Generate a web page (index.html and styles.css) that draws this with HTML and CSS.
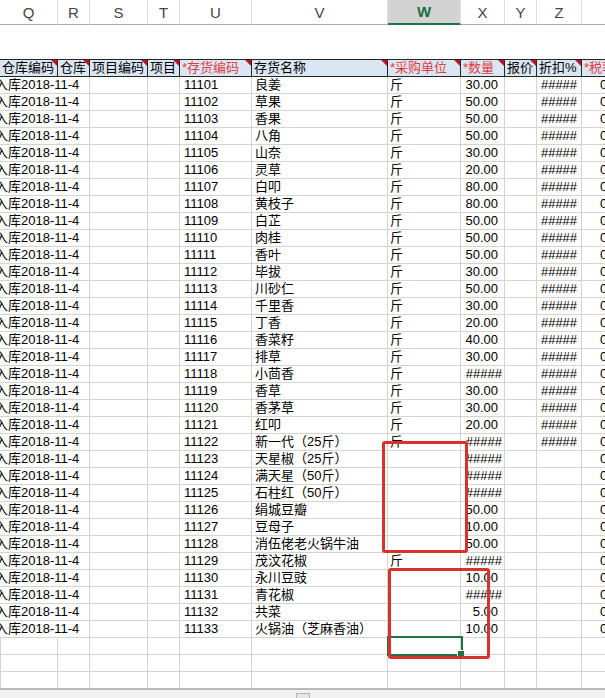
FILE: index.html
```html
<!DOCTYPE html>
<html lang="zh">
<head>
<meta charset="utf-8">
<title>Sheet</title>
<link rel="stylesheet" href="styles.css">
</head>
<body>
<div class="sheet">
  <div class="row letters">
    <div class="l">Q</div><div class="l">R</div><div class="l">S</div><div class="l">T</div><div class="l">U</div><div class="l">V</div><div class="l sel">W</div><div class="l">X</div><div class="l">Y</div><div class="l">Z</div><div class="l">A</div>
  </div>
  <div class="gap"></div>
  <div class="row thead">
    <div class="h">仓库编码</div><div class="h">仓库</div><div class="h">项目编码</div><div class="h">项目</div><div class="h req">*存货编码</div><div class="h">存货名称</div><div class="h req">*采购单位</div><div class="h req">*数量</div><div class="h">报价</div><div class="h">折扣%</div><div class="h req">*税率</div>
  </div>

  <div class="row"><div class="c q">入库2018-11-4</div><div class="c"></div><div class="c"></div><div class="c"></div><div class="c u">11101</div><div class="c v">良姜</div><div class="c w">斤</div><div class="c x">30.00</div><div class="c"></div><div class="c z">#####</div><div class="c aa">0.00</div></div>
  <div class="row"><div class="c q">入库2018-11-4</div><div class="c"></div><div class="c"></div><div class="c"></div><div class="c u">11102</div><div class="c v">草果</div><div class="c w">斤</div><div class="c x">50.00</div><div class="c"></div><div class="c z">#####</div><div class="c aa">0.00</div></div>
  <div class="row"><div class="c q">入库2018-11-4</div><div class="c"></div><div class="c"></div><div class="c"></div><div class="c u">11103</div><div class="c v">香果</div><div class="c w">斤</div><div class="c x">50.00</div><div class="c"></div><div class="c z">#####</div><div class="c aa">0.00</div></div>
  <div class="row"><div class="c q">入库2018-11-4</div><div class="c"></div><div class="c"></div><div class="c"></div><div class="c u">11104</div><div class="c v">八角</div><div class="c w">斤</div><div class="c x">50.00</div><div class="c"></div><div class="c z">#####</div><div class="c aa">0.00</div></div>
  <div class="row"><div class="c q">入库2018-11-4</div><div class="c"></div><div class="c"></div><div class="c"></div><div class="c u">11105</div><div class="c v">山奈</div><div class="c w">斤</div><div class="c x">30.00</div><div class="c"></div><div class="c z">#####</div><div class="c aa">0.00</div></div>
  <div class="row"><div class="c q">入库2018-11-4</div><div class="c"></div><div class="c"></div><div class="c"></div><div class="c u">11106</div><div class="c v">灵草</div><div class="c w">斤</div><div class="c x">20.00</div><div class="c"></div><div class="c z">#####</div><div class="c aa">0.00</div></div>
  <div class="row"><div class="c q">入库2018-11-4</div><div class="c"></div><div class="c"></div><div class="c"></div><div class="c u">11107</div><div class="c v">白叩</div><div class="c w">斤</div><div class="c x">80.00</div><div class="c"></div><div class="c z">#####</div><div class="c aa">0.00</div></div>
  <div class="row"><div class="c q">入库2018-11-4</div><div class="c"></div><div class="c"></div><div class="c"></div><div class="c u">11108</div><div class="c v">黄枝子</div><div class="c w">斤</div><div class="c x">80.00</div><div class="c"></div><div class="c z">#####</div><div class="c aa">0.00</div></div>
  <div class="row"><div class="c q">入库2018-11-4</div><div class="c"></div><div class="c"></div><div class="c"></div><div class="c u">11109</div><div class="c v">白芷</div><div class="c w">斤</div><div class="c x">50.00</div><div class="c"></div><div class="c z">#####</div><div class="c aa">0.00</div></div>
  <div class="row"><div class="c q">入库2018-11-4</div><div class="c"></div><div class="c"></div><div class="c"></div><div class="c u">11110</div><div class="c v">肉桂</div><div class="c w">斤</div><div class="c x">50.00</div><div class="c"></div><div class="c z">#####</div><div class="c aa">0.00</div></div>
  <div class="row"><div class="c q">入库2018-11-4</div><div class="c"></div><div class="c"></div><div class="c"></div><div class="c u">11111</div><div class="c v">香叶</div><div class="c w">斤</div><div class="c x">50.00</div><div class="c"></div><div class="c z">#####</div><div class="c aa">0.00</div></div>
  <div class="row"><div class="c q">入库2018-11-4</div><div class="c"></div><div class="c"></div><div class="c"></div><div class="c u">11112</div><div class="c v">毕拔</div><div class="c w">斤</div><div class="c x">30.00</div><div class="c"></div><div class="c z">#####</div><div class="c aa">0.00</div></div>
  <div class="row"><div class="c q">入库2018-11-4</div><div class="c"></div><div class="c"></div><div class="c"></div><div class="c u">11113</div><div class="c v">川砂仁</div><div class="c w">斤</div><div class="c x">50.00</div><div class="c"></div><div class="c z">#####</div><div class="c aa">0.00</div></div>
  <div class="row"><div class="c q">入库2018-11-4</div><div class="c"></div><div class="c"></div><div class="c"></div><div class="c u">11114</div><div class="c v">千里香</div><div class="c w">斤</div><div class="c x">30.00</div><div class="c"></div><div class="c z">#####</div><div class="c aa">0.00</div></div>
  <div class="row"><div class="c q">入库2018-11-4</div><div class="c"></div><div class="c"></div><div class="c"></div><div class="c u">11115</div><div class="c v">丁香</div><div class="c w">斤</div><div class="c x">20.00</div><div class="c"></div><div class="c z">#####</div><div class="c aa">0.00</div></div>
  <div class="row"><div class="c q">入库2018-11-4</div><div class="c"></div><div class="c"></div><div class="c"></div><div class="c u">11116</div><div class="c v">香菜籽</div><div class="c w">斤</div><div class="c x">40.00</div><div class="c"></div><div class="c z">#####</div><div class="c aa">0.00</div></div>
  <div class="row"><div class="c q">入库2018-11-4</div><div class="c"></div><div class="c"></div><div class="c"></div><div class="c u">11117</div><div class="c v">排草</div><div class="c w">斤</div><div class="c x">30.00</div><div class="c"></div><div class="c z">#####</div><div class="c aa">0.00</div></div>
  <div class="row"><div class="c q">入库2018-11-4</div><div class="c"></div><div class="c"></div><div class="c"></div><div class="c u">11118</div><div class="c v">小茴香</div><div class="c w">斤</div><div class="c x hash">#####</div><div class="c"></div><div class="c z">#####</div><div class="c aa">0.00</div></div>
  <div class="row"><div class="c q">入库2018-11-4</div><div class="c"></div><div class="c"></div><div class="c"></div><div class="c u">11119</div><div class="c v">香草</div><div class="c w">斤</div><div class="c x">30.00</div><div class="c"></div><div class="c z">#####</div><div class="c aa">0.00</div></div>
  <div class="row"><div class="c q">入库2018-11-4</div><div class="c"></div><div class="c"></div><div class="c"></div><div class="c u">11120</div><div class="c v">香茅草</div><div class="c w">斤</div><div class="c x">30.00</div><div class="c"></div><div class="c z">#####</div><div class="c aa">0.00</div></div>
  <div class="row"><div class="c q">入库2018-11-4</div><div class="c"></div><div class="c"></div><div class="c"></div><div class="c u">11121</div><div class="c v">红叩</div><div class="c w">斤</div><div class="c x">20.00</div><div class="c"></div><div class="c z">#####</div><div class="c aa">0.00</div></div>
  <div class="row"><div class="c q">入库2018-11-4</div><div class="c"></div><div class="c"></div><div class="c"></div><div class="c u">11122</div><div class="c v">新一代（25斤）</div><div class="c w">斤</div><div class="c x hash">#####</div><div class="c"></div><div class="c z">#####</div><div class="c aa">0.00</div></div>
  <div class="row"><div class="c q">入库2018-11-4</div><div class="c"></div><div class="c"></div><div class="c"></div><div class="c u">11123</div><div class="c v">天星椒（25斤）</div><div class="c w"></div><div class="c x hash">#####</div><div class="c"></div><div class="c z"></div><div class="c aa">0.00</div></div>
  <div class="row"><div class="c q">入库2018-11-4</div><div class="c"></div><div class="c"></div><div class="c"></div><div class="c u">11124</div><div class="c v">满天星（50斤）</div><div class="c w"></div><div class="c x hash">#####</div><div class="c"></div><div class="c z"></div><div class="c aa">0.00</div></div>
  <div class="row"><div class="c q">入库2018-11-4</div><div class="c"></div><div class="c"></div><div class="c"></div><div class="c u">11125</div><div class="c v">石柱红（50斤）</div><div class="c w"></div><div class="c x hash">#####</div><div class="c"></div><div class="c z"></div><div class="c aa">0.00</div></div>
  <div class="row"><div class="c q">入库2018-11-4</div><div class="c"></div><div class="c"></div><div class="c"></div><div class="c u">11126</div><div class="c v">绢城豆瓣</div><div class="c w"></div><div class="c x">50.00</div><div class="c"></div><div class="c z"></div><div class="c aa">0.00</div></div>
  <div class="row"><div class="c q">入库2018-11-4</div><div class="c"></div><div class="c"></div><div class="c"></div><div class="c u">11127</div><div class="c v">豆母子</div><div class="c w"></div><div class="c x">10.00</div><div class="c"></div><div class="c z"></div><div class="c aa">0.00</div></div>
  <div class="row"><div class="c q">入库2018-11-4</div><div class="c"></div><div class="c"></div><div class="c"></div><div class="c u">11128</div><div class="c v">消伍佬老火锅牛油</div><div class="c w"></div><div class="c x">50.00</div><div class="c"></div><div class="c z"></div><div class="c aa">0.00</div></div>
  <div class="row"><div class="c q">入库2018-11-4</div><div class="c"></div><div class="c"></div><div class="c"></div><div class="c u">11129</div><div class="c v">茂汶花椒</div><div class="c w">斤</div><div class="c x hash">#####</div><div class="c"></div><div class="c z"></div><div class="c aa">0.00</div></div>
  <div class="row"><div class="c q">入库2018-11-4</div><div class="c"></div><div class="c"></div><div class="c"></div><div class="c u">11130</div><div class="c v">永川豆豉</div><div class="c w"></div><div class="c x">10.00</div><div class="c"></div><div class="c z"></div><div class="c aa">0.00</div></div>
  <div class="row"><div class="c q">入库2018-11-4</div><div class="c"></div><div class="c"></div><div class="c"></div><div class="c u">11131</div><div class="c v">青花椒</div><div class="c w"></div><div class="c x hash">#####</div><div class="c"></div><div class="c z"></div><div class="c aa">0.00</div></div>
  <div class="row"><div class="c q">入库2018-11-4</div><div class="c"></div><div class="c"></div><div class="c"></div><div class="c u">11132</div><div class="c v">共菜</div><div class="c w"></div><div class="c x">5.00</div><div class="c"></div><div class="c z"></div><div class="c aa">0.00</div></div>
  <div class="row"><div class="c q">入库2018-11-4</div><div class="c"></div><div class="c"></div><div class="c"></div><div class="c u">11133</div><div class="c v">火锅油（芝麻香油）</div><div class="c w"></div><div class="c x">10.00</div><div class="c"></div><div class="c z"></div><div class="c aa">0.00</div></div>

  <div class="row empty"><div class="c first"></div><div class="c"></div><div class="c"></div><div class="c"></div><div class="c"></div><div class="c"></div><div class="c"></div><div class="c"></div><div class="c"></div><div class="c"></div><div class="c"></div></div>
  <div class="row empty"><div class="c first"></div><div class="c"></div><div class="c"></div><div class="c"></div><div class="c"></div><div class="c"></div><div class="c"></div><div class="c"></div><div class="c"></div><div class="c"></div><div class="c"></div></div>
  <div class="row empty"><div class="c first"></div><div class="c"></div><div class="c"></div><div class="c"></div><div class="c"></div><div class="c"></div><div class="c"></div><div class="c"></div><div class="c"></div><div class="c"></div><div class="c"></div></div>

  <div class="bottombar"><div class="tabbtn"></div></div>

  <div class="selcell"></div>
  <div class="mark mark1"></div>
  <div class="mark mark2"></div>
</div>
</body>
</html>
```

FILE: styles.css
```css
html, body {
  margin: 0;
  padding: 0;
}
body {
  width: 605px;
  height: 698px;
  overflow: hidden;
  background: #fff;
  font-family: "Liberation Sans", "Noto Sans CJK SC", sans-serif;
  font-size: 13px;
  color: #000;
}
.sheet {
  position: relative;
  width: 605px;
  height: 698px;
  overflow: hidden;
}
.row {
  display: grid;
  grid-template-columns: 58px 32px 58px 32px 72px 136px 73px 44px 32px 45px 80px;
  width: 662px;
}
.letters {
  height: 25px;
}
.letters .l {
  box-sizing: border-box;
  height: 25px;
  border-right: 1px solid #e0e0e0;
  border-bottom: 1px solid #ababab;
  display: flex;
  align-items: center;
  justify-content: center;
  font-size: 15px;
  color: #444;
  background: #fff;
}
.letters .sel {
  background: #d3d3d3;
  border-bottom: 2px solid #217346;
  color: #1f6b43;
  font-weight: bold;
}
.gap {
  height: 34px;
}
.thead .h {
  box-sizing: border-box;
  position: relative;
  height: 18px;
  border-top: 1px solid #262626;
  border-bottom: 1px solid #262626;
  border-right: 1px solid #262626;
  background: #dbe6f3;
  line-height: 16px;
  padding-left: 2px;
  white-space: nowrap;
  overflow: hidden;
}
.thead .h::after {
  content: "";
  position: absolute;
  top: 0;
  right: 0;
  border-top: 6px solid #c0102a;
  border-left: 6px solid transparent;
}
.thead .req {
  color: #e33b44;
}
.c {
  box-sizing: border-box;
  height: 17px;
  border-right: 1px solid #d4d4d4;
  border-bottom: 1px solid #d4d4d4;
  line-height: 16px;
  white-space: nowrap;
  overflow: hidden;
}
.c.q {
  border-right: none;
  overflow: visible;
  text-indent: -5px;
}
.c.u {
  padding-left: 4px;
}
.c.v {
  padding-left: 3px;
}
.c.w {
  padding-left: 2px;
}
.c.x {
  text-align: right;
  padding-right: 6px;
}
.c.x.hash {
  padding-right: 2px;
}
.c.z {
  text-align: center;
}
.c.aa {
  padding-left: 18px;
  border-right: none;
}
.empty .first {
  border-left: 1px solid #d4d4d4;
}
.bottombar {
  position: relative;
  height: 9px;
  border-top: 2px solid #b9b9b9;
  background: #f1f1f1;
  margin-top: -1px;
}
.tabbtn {
  position: absolute;
  left: 296px;
  top: 3px;
  width: 14px;
  height: 10px;
  box-sizing: border-box;
  border: 1px solid #b5b5b5;
  background: #e6e6e6;
}
.selcell {
  position: absolute;
  left: 387px;
  top: 636px;
  width: 76px;
  height: 20px;
  box-sizing: border-box;
  border: 2px solid #217346;
}
.selcell::after {
  content: "";
  position: absolute;
  right: -4px;
  bottom: -4px;
  width: 6px;
  height: 6px;
  background: #217346;
  border: 1px solid #fff;
}
.mark {
  position: absolute;
  box-sizing: border-box;
  border: 3px solid #d9322b;
  border-radius: 3px;
}
.mark1 {
  left: 382px;
  top: 441px;
  width: 86px;
  height: 112px;
}
.mark2 {
  left: 388px;
  top: 568px;
  width: 102px;
  height: 91px;
}
```
